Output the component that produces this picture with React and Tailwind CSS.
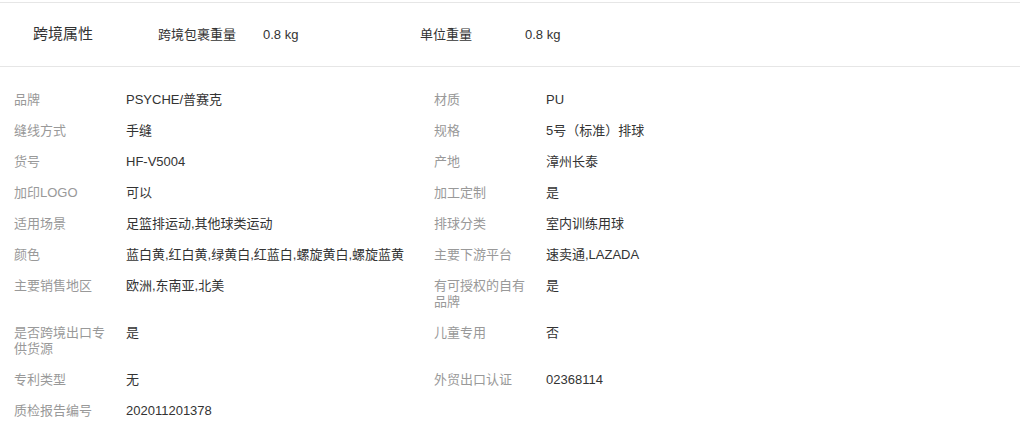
import React from 'react';

const crossBorder = [
    { label: '跨境包裹重量', value: '0.8 kg' },
    { label: '单位重量', value: '0.8 kg' },
];

const attributes = [
    ['品牌', 'PSYCHE/普赛克'], ['材质', 'PU'],
    ['缝线方式', '手缝'], ['规格', '5号（标准）排球'],
    ['货号', 'HF-V5004'], ['产地', '漳州长泰'],
    ['加印LOGO', '可以'], ['加工定制', '是'],
    ['适用场景', '足篮排运动,其他球类运动'], ['排球分类', '室内训练用球'],
    ['颜色', '蓝白黄,红白黄,绿黄白,红蓝白,螺旋黄白,螺旋蓝黄'], ['主要下游平台', '速卖通,LAZADA'],
    ['主要销售地区', '欧洲,东南亚,北美'], ['有可授权的自有品牌', '是'],
    ['是否跨境出口专供货源', '是'], ['儿童专用', '否'],
    ['专利类型', '无'], ['外贸出口认证', '02368114'],
    ['质检报告编号', '202011201378'],
];

const App = () => {
    return (
        <div className="w-[1020px] min-h-[434px] bg-white pt-[2px] font-['Liberation_Sans','Noto_Sans_CJK_SC',sans-serif]">
            <div className="flex items-center h-[65px] border-y border-[#e6e6e6] text-[#333]">
                <div className="w-[158px] pl-[33px] text-[15px]">跨境属性</div>
                {crossBorder.map(item => (
                    <div key={item.label} className="flex w-[262px] text-[13px]">
                        <span className="w-[105px]">{item.label}</span>
                        <span>{item.value}</span>
                    </div>
                ))}
            </div>

            <div className="grid grid-cols-2 w-[840px] pt-[18px] text-[13px] leading-[16px]">
                {attributes.map(([label, value]) => (
                    <div key={label} className="flex pt-[7px] pb-[8px]">
                        <div className="w-[126px] shrink-0 pl-[14px] pr-[14px] text-[#999]">{label}</div>
                        <div className="text-[#333]">{value}</div>
                    </div>
                ))}
            </div>
        </div>
    );
};

export default App;
